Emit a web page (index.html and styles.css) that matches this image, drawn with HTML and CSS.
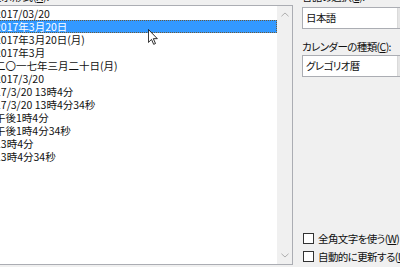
FILE: index.html
```html
<!DOCTYPE html>
<html lang="ja">
<head>
  <meta charset="UTF-8" />
  <title>日付と時刻</title>
  <link rel="stylesheet" href="styles.css">
</head>
<body>
  <div class="dialog">
    <!-- left: format list -->
    <div class="format">
      <div class="field-label">表示形式(<u>A</u>):</div>
      <div class="listbox">
        <ul class="items">
          <li>2017/03/20</li>
          <li class="selected">2017年3月20日</li>
          <li>2017年3月20日(月)</li>
          <li>2017年3月</li>
          <li>二〇一七年三月二十日(月)</li>
          <li>2017/3/20</li>
          <li>17/3/20 13時4分</li>
          <li>17/3/20 13時4分34秒</li>
          <li>午後1時4分</li>
          <li>午後1時4分34秒</li>
          <li>13時4分</li>
          <li>13時4分34秒</li>
        </ul>
        <div class="scrollbar">
          <svg class="arrow" viewBox="0 0 9 5"><path d="M0.5 4.5 L4.5 0.8 L8.5 4.5" /></svg>
          <svg class="arrow" viewBox="0 0 9 5"><path d="M0.5 0.5 L4.5 4.2 L8.5 0.5" /></svg>
        </div>
      </div>
    </div>

    <!-- right: language, calendar, options -->
    <div class="options">
      <div class="field-label">言語の選択(<u>L</u>):</div>
      <div class="combo">
        <span class="combo-text">日本語</span>
        <span class="combo-button"></span>
      </div>
      <div class="field-label second">カレンダーの種類(<u>C</u>):</div>
      <div class="combo">
        <span class="combo-text">グレゴリオ暦</span>
        <span class="combo-button"></span>
      </div>
      <div class="checks">
        <label class="check"><span class="box"></span>全角文字を使う(<u>W</u>)</label>
        <label class="check"><span class="box"></span>自動的に更新する(<u>U</u>)</label>
      </div>
    </div>

    <!-- mouse pointer over the list -->
    <svg class="cursor" viewBox="0 0 12 19">
      <path d="M0.5 0.5 L0.5 16 L4.2 12.4 L6.8 18.3 L9 17.3 L6.4 11.5 L11.2 11.5 Z" />
    </svg>
  </div>
</body>
</html>
```

FILE: styles.css
```css
body {
  margin: 0;
  background-color: #f0f0f0;
  font-family: "Noto Sans CJK JP", "Noto Sans", sans-serif;
  font-size: 10.5px;
  font-feature-settings: "palt";
  color: #111;
}

.dialog {
  position: relative;
  display: flex;
  width: 400px;
  height: 267px;
  overflow: hidden;
}

.field-label {
  height: 13px;
  line-height: 13px;
  margin-top: -10px;
  margin-bottom: 2px;
  white-space: nowrap;
}

.field-label.second {
  margin-top: 11px;
  margin-bottom: 0;
}

/* list box */
.format {
  display: flex;
  flex-direction: column;
  width: 302px;
  margin-left: -9px;
  flex-shrink: 0;
}

.listbox {
  display: flex;
  height: 258px;
  border: 1px solid #abadb3;
  background-color: #fff;
}

.items {
  flex: 1;
  margin: 0;
  padding: 1px 0 0;
  list-style: none;
}

.items li {
  height: 13px;
  line-height: 13px;
  padding-left: 3px;
  white-space: nowrap;
}

.items li.selected {
  background-color: #3399ff;
  color: #fff;
  outline: 1px dotted #6b5a3a;
  outline-offset: -1px;
}

.scrollbar {
  width: 15px;
  background-color: #f0f0f0;
  display: flex;
  flex-direction: column;
  justify-content: space-between;
  align-items: center;
  padding: 6px 0;
}

.arrow {
  width: 8px;
  height: 5px;
  fill: none;
  stroke: #a6a6a6;
  stroke-width: 1;
}

/* right column */
.options {
  display: flex;
  flex-direction: column;
  margin-left: 9px;
  width: 120px;
  flex-shrink: 0;
  letter-spacing: -0.6px;
}

.combo {
  display: flex;
  height: 22px;
  border: 1px solid #abadb3;
  background-color: #fff;
  box-sizing: border-box;
}

.field-label + .combo {
  margin-top: 2px;
}

.combo-text {
  width: 91px;
  padding-left: 3px;
  line-height: 20px;
}

.combo-button {
  flex: 1;
  background-color: #e5e5e5;
  border-left: 1px solid #dadada;
}

.checks {
  margin-top: auto;
  margin-bottom: 2px;
  display: flex;
  flex-direction: column;
}

.check {
  display: flex;
  align-items: center;
  height: 18px;
  white-space: nowrap;
}

.box {
  flex-shrink: 0;
  width: 11px;
  height: 11px;
  border: 1px solid #333;
  background-color: #fff;
  margin-left: 1px;
  margin-right: 4px;
  box-sizing: border-box;
}

.cursor {
  position: absolute;
  left: 148px;
  top: 29px;
  width: 10px;
  height: 16px;
  fill: #fff;
  stroke: #000;
  stroke-width: 1;
}
```
